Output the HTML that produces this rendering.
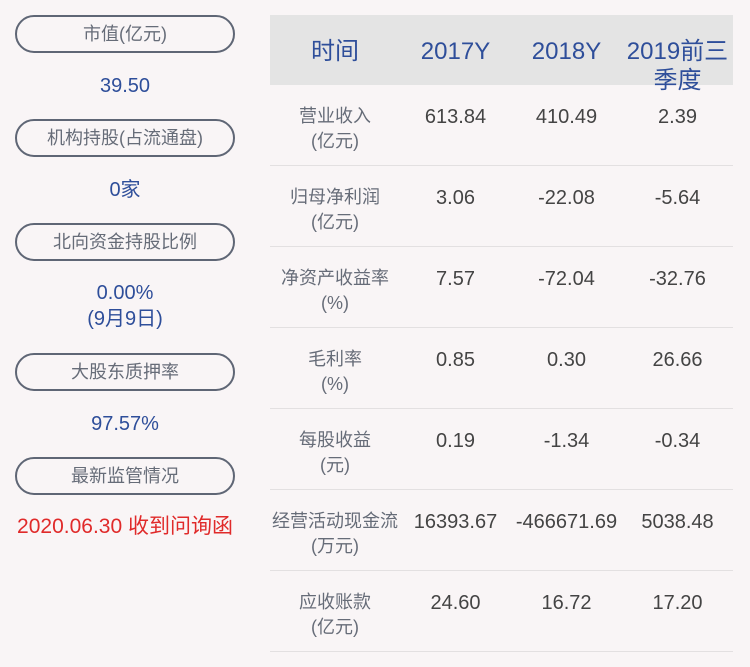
<!DOCTYPE html>
<html><head><meta charset="utf-8"><style>
*{margin:0;padding:0;box-sizing:border-box}
body{width:750px;height:667px;background:#f9f5f6;position:relative;overflow:hidden;font-family:"Liberation Sans","Noto Sans CJK SC",sans-serif}
.pill{position:absolute;left:15px;width:220px;height:38px;border:2px solid #5f6675;border-radius:19px;color:#666c78;font-size:18px;text-align:center;line-height:34px}
.val{position:absolute;left:15px;width:220px;text-align:center;color:#2e4e9a;font-size:20px;line-height:26px}
.hdr{position:absolute;left:270px;top:15px;width:463px;height:70px;background:#e4e4e4}
.h{position:absolute;color:#2e4e9a;font-size:24px;text-align:center;line-height:29px}
.row{position:absolute;left:270px;width:463px;height:81px;border-bottom:1.5px solid #e3e0e1}
.lab{position:absolute;left:0;width:130px;top:19px;text-align:center;color:#666c78;font-size:18px;line-height:25px}
.c{position:absolute;top:20px;width:111px;text-align:center;color:#444;font-size:20px;line-height:25px}
.c1{left:130px}.c2{left:241px}.c3{left:352px}
</style></head><body>
<div class="pill" style="top:15px">市值(亿元)</div>
<div class="val" style="top:73px">39.50</div>
<div class="pill" style="top:119px">机构持股(占流通盘)</div>
<div class="val" style="top:177px">0家</div>
<div class="pill" style="top:223px">北向资金持股比例</div>
<div class="val" style="top:280px">0.00%<br>(9月9日)</div>
<div class="pill" style="top:353px">大股东质押率</div>
<div class="val" style="top:411px">97.57%</div>
<div class="pill" style="top:457px">最新监管情况</div>
<div class="val" style="top:514px;color:#e02a2a;left:0;width:250px;font-size:21px">2020.06.30 收到问询函</div>

<div class="hdr"></div>
<div class="h" style="left:270px;width:130px;top:37px">时间</div>
<div class="h" style="left:400px;width:111px;top:37px">2017Y</div>
<div class="h" style="left:511px;width:111px;top:37px">2018Y</div>
<div class="h" style="left:622px;width:111px;top:37px">2019前三<br>季度</div>

<div class="row" style="top:85px"><div class="lab">营业收入<br>(亿元)</div><div class="c c1">613.84</div><div class="c c2">410.49</div><div class="c c3">2.39</div></div>
<div class="row" style="top:166px"><div class="lab">归母净利润<br>(亿元)</div><div class="c c1">3.06</div><div class="c c2">-22.08</div><div class="c c3">-5.64</div></div>
<div class="row" style="top:247px"><div class="lab">净资产收益率<br>(%)</div><div class="c c1">7.57</div><div class="c c2">-72.04</div><div class="c c3">-32.76</div></div>
<div class="row" style="top:328px"><div class="lab">毛利率<br>(%)</div><div class="c c1">0.85</div><div class="c c2">0.30</div><div class="c c3">26.66</div></div>
<div class="row" style="top:409px"><div class="lab">每股收益<br>(元)</div><div class="c c1">0.19</div><div class="c c2">-1.34</div><div class="c c3">-0.34</div></div>
<div class="row" style="top:490px"><div class="lab">经营活动现金流<br>(万元)</div><div class="c c1">16393.67</div><div class="c c2">-466671.69</div><div class="c c3">5038.48</div></div>
<div class="row" style="top:571px"><div class="lab">应收账款<br>(亿元)</div><div class="c c1">24.60</div><div class="c c2">16.72</div><div class="c c3">17.20</div></div>
</body></html>
